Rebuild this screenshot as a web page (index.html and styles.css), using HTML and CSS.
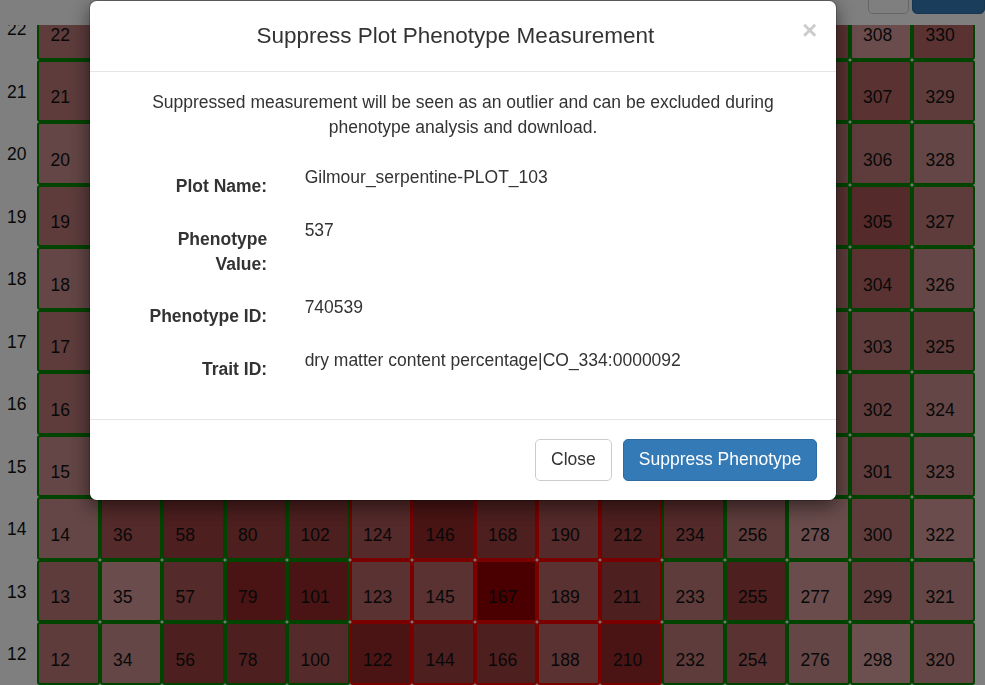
FILE: index.html
```html
<!DOCTYPE html>
<html lang="en">
<head>
<meta charset="utf-8">
<title>Suppress Plot Phenotype Measurement</title>
<link rel="stylesheet" href="styles.css">
</head>
<body>
<div class="topbar">
  <button class="btn btn-default tb-small">▾</button>
  <button class="btn btn-primary tb-wide">Save</button>
</div>
<div class="field">
  <div class="grid">
    <div class="row"><div class="rowlabel">22</div>
      <div class="plot h3">22</div><div class="plot h5">44</div><div class="plot h6">66</div><div class="plot h5">88</div><div class="plot h6">110</div><div class="plot ctl h5">132</div><div class="plot ctl h7">154</div><div class="plot ctl h6">176</div><div class="plot ctl h5">198</div><div class="plot ctl h6">220</div><div class="plot h4">242</div><div class="plot h3">264</div><div class="plot h4">286</div><div class="plot h1">308</div><div class="plot h4">330</div>
    </div>
    <div class="row"><div class="rowlabel">21</div>
      <div class="plot h3">21</div><div class="plot h4">43</div><div class="plot h6">65</div><div class="plot h6">87</div><div class="plot h5">109</div><div class="plot ctl h6">131</div><div class="plot ctl h6">153</div><div class="plot ctl h7">175</div><div class="plot ctl h5">197</div><div class="plot ctl h6">219</div><div class="plot h5">241</div><div class="plot h3">263</div><div class="plot h4">285</div><div class="plot h4">307</div><div class="plot h3">329</div>
    </div>
    <div class="row"><div class="rowlabel">20</div>
      <div class="plot h2">20</div><div class="plot h4">42</div><div class="plot h5">64</div><div class="plot h6">86</div><div class="plot h6">108</div><div class="plot ctl h5">130</div><div class="plot ctl h7">152</div><div class="plot ctl h6">174</div><div class="plot ctl h4">196</div><div class="plot ctl h7">218</div><div class="plot h5">240</div><div class="plot h4">262</div><div class="plot h3">284</div><div class="plot h3">306</div><div class="plot h2">328</div>
    </div>
    <div class="row"><div class="rowlabel">19</div>
      <div class="plot h3">19</div><div class="plot h5">41</div><div class="plot h6">63</div><div class="plot h5">85</div><div class="plot h7">107</div><div class="plot ctl h6">129</div><div class="plot ctl h6">151</div><div class="plot ctl h5">173</div><div class="plot ctl h6">195</div><div class="plot ctl h6">217</div><div class="plot h4">239</div><div class="plot h3">261</div><div class="plot h4">283</div><div class="plot h5">305</div><div class="plot h3">327</div>
    </div>
    <div class="row"><div class="rowlabel">18</div>
      <div class="plot h2">18</div><div class="plot h4">40</div><div class="plot h5">62</div><div class="plot h6">84</div><div class="plot h6">106</div><div class="plot ctl h7">128</div><div class="plot ctl h6">150</div><div class="plot ctl h6">172</div><div class="plot ctl h5">194</div><div class="plot ctl h7">216</div><div class="plot h5">238</div><div class="plot h4">260</div><div class="plot h3">282</div><div class="plot h4">304</div><div class="plot h2">326</div>
    </div>
    <div class="row"><div class="rowlabel">17</div>
      <div class="plot h3">17</div><div class="plot h5">39</div><div class="plot h6">61</div><div class="plot h6">83</div><div class="plot h5">105</div><div class="plot ctl h6">127</div><div class="plot ctl h7">149</div><div class="plot ctl h6">171</div><div class="plot ctl h5">193</div><div class="plot ctl h6">215</div><div class="plot h4">237</div><div class="plot h4">259</div><div class="plot h3">281</div><div class="plot h3">303</div><div class="plot h3">325</div>
    </div>
    <div class="row"><div class="rowlabel">16</div>
      <div class="plot h3">16</div><div class="plot h4">38</div><div class="plot h6">60</div><div class="plot h5">82</div><div class="plot h6">104</div><div class="plot ctl h5">126</div><div class="plot ctl h6">148</div><div class="plot ctl h7">170</div><div class="plot ctl h5">192</div><div class="plot ctl h6">214</div><div class="plot h5">236</div><div class="plot h3">258</div><div class="plot h3">280</div><div class="plot h3">302</div><div class="plot h2">324</div>
    </div>
    <div class="row"><div class="rowlabel">15</div>
      <div class="plot h2">15</div><div class="plot h4">37</div><div class="plot h5">59</div><div class="plot h6">81</div><div class="plot h6">103</div><div class="plot ctl h6">125</div><div class="plot ctl h6">147</div><div class="plot ctl h6">169</div><div class="plot ctl h4">191</div><div class="plot ctl h7">213</div><div class="plot h5">235</div><div class="plot h4">257</div><div class="plot h2">279</div><div class="plot h3">301</div><div class="plot h2">323</div>
    </div>
    <div class="row"><div class="rowlabel">14</div>
      <div class="plot h2">14</div><div class="plot h5">36</div><div class="plot h6">58</div><div class="plot h6">80</div><div class="plot h6">102</div><div class="plot ctl h5">124</div><div class="plot ctl h7">146</div><div class="plot ctl h6">168</div><div class="plot ctl h5">190</div><div class="plot ctl h6">212</div><div class="plot h5">234</div><div class="plot h3">256</div><div class="plot h1">278</div><div class="plot h3">300</div><div class="plot h1">322</div>
    </div>
    <div class="row"><div class="rowlabel">13</div>
      <div class="plot h3">13</div><div class="plot h1">35</div><div class="plot h5">57</div><div class="plot h7">79</div><div class="plot h7">101</div><div class="plot ctl h4">123</div><div class="plot ctl h4">145</div><div class="plot ctl h8">167</div><div class="plot ctl h4">189</div><div class="plot ctl h6">211</div><div class="plot h3">233</div><div class="plot h6">255</div><div class="plot h1">277</div><div class="plot h3">299</div><div class="plot h2">321</div>
    </div>
    <div class="row"><div class="rowlabel">12</div>
      <div class="plot h3">12</div><div class="plot h2">34</div><div class="plot h6">56</div><div class="plot h6">78</div><div class="plot h5">100</div><div class="plot ctl h7">122</div><div class="plot ctl h6">144</div><div class="plot ctl h6">166</div><div class="plot ctl h4">188</div><div class="plot ctl h7">210</div><div class="plot h3">232</div><div class="plot h4">254</div><div class="plot h2">276</div><div class="plot h0">298</div><div class="plot h2">320</div>
    </div>
  </div>
</div>

<div class="backdrop"></div>
<div class="modal">
  <div class="dialog">
    <div class="modal-header">
      <h4 class="modal-title">Suppress Plot Phenotype Measurement</h4>
      <button class="close" type="button">×</button>
    </div>
    <div class="modal-body">
      <p class="intro">Suppressed measurement will be seen as an outlier and can be excluded during phenotype analysis and download.</p>
      <div class="form">
        <div class="form-group">
          <div class="control-label">Plot Name:</div>
          <div class="value">Gilmour_serpentine-PLOT_103</div>
        </div>
        <div class="form-group">
          <div class="control-label">Phenotype Value:</div>
          <div class="value">537</div>
        </div>
        <div class="form-group">
          <div class="control-label">Phenotype ID:</div>
          <div class="value">740539</div>
        </div>
        <div class="form-group">
          <div class="control-label">Trait ID:</div>
          <div class="value">dry matter content percentage|CO_334:0000092</div>
        </div>
      </div>
    </div>
    <div class="modal-footer">
      <button class="btn btn-default" type="button">Close</button>
      <button class="btn btn-primary" type="button">Suppress Phenotype</button>
    </div>
  </div>
</div>
</body>
</html>
```

FILE: styles.css
```css
* { box-sizing: border-box; }

body {
  margin: 0;
  font-family: "Liberation Sans", Arial, Helvetica, sans-serif;
  font-size: 17.5px;
  line-height: 25px;
  color: #333;
  background: #fff;
  overflow: hidden;
}

/* ---------- top bar ---------- */
.topbar {
  height: 25px;
  display: flex;
  align-items: flex-start;
  gap: 3px;
  padding-left: 868px;
  white-space: nowrap;
  overflow: hidden;
}
.topbar .btn { margin-top: -28px; }
.tb-small { width: 49px; }
.tb-wide { width: 110px; }

/* ---------- field layout ---------- */
.field {
  height: 660px;
  overflow: hidden;
}
.grid { margin-top: -28px; }
.row {
  display: flex;
  height: 62.5px;
}
.rowlabel {
  width: 37px;
  flex: none;
  padding-left: 7px;
  padding-top: 3px;
  display: flex;
  align-items: center;
  color: #111;
}
.plot {
  width: 62.5px;
  height: 62.5px;
  flex: none;
  border: 2px solid #008800;
  border-radius: 3px;
  padding: 14px 0 0 11.5px;
  display: flex;
  align-items: center;
  color: #111;
}
.plot.ctl { border-color: #f40000; }

.h0 { background: #d8a0a0; }
.h1 { background: #d49898; }
.h2 { background: #c88c8c; }
.h3 { background: #bc7878; }
.h4 { background: #b46464; }
.h5 { background: #aa5454; }
.h6 { background: #9c3e3e; }
.h7 { background: #942828; }
.h8 { background: #940000; }

/* ---------- buttons ---------- */
.btn {
  font-family: inherit;
  font-size: 17.5px;
  line-height: 25px;
  padding: 7.5px 15px;
  border: 1px solid transparent;
  border-radius: 5px;
  cursor: pointer;
}
.btn-default {
  background: #fff;
  border-color: #ccc;
  color: #333;
}
.btn-primary {
  background: #337ab7;
  border-color: #2e6da4;
  color: #fff;
}

/* ---------- modal ---------- */
.backdrop {
  position: fixed;
  inset: 0;
  background: rgba(0, 0, 0, 0.5);
}
.modal {
  position: fixed;
  inset: 0;
}
.dialog {
  width: 748px;
  margin-left: 89px;
  background: #fff;
  background-clip: padding-box;
  border: 1px solid rgba(0, 0, 0, 0.2);
  border-radius: 7.5px;
  box-shadow: 0 6px 19px rgba(0, 0, 0, 0.5);
}
.modal-header {
  display: flex;
  align-items: flex-start;
  padding: 18.75px;
  border-bottom: 1px solid #e5e5e5;
}
.modal-title {
  flex: 1;
  margin: 0;
  font-size: 22.5px;
  line-height: 32px;
  font-weight: 500;
  text-align: center;
  color: #333;
}
.close {
  margin-top: -2.5px;
  padding: 0;
  border: 0;
  background: none;
  font-family: inherit;
  font-size: 26.25px;
  font-weight: 700;
  line-height: 1;
  color: #000;
  text-shadow: 0 1px 0 #fff;
  opacity: 0.2;
}
.modal-body { padding: 18.75px; }
.intro {
  max-width: 680px;
  margin: 0 auto 25px;
  text-align: center;
}
.form-group {
  display: flex;
  margin-bottom: 18.75px;
}
.control-label {
  width: 25%;
  flex: none;
  padding: 8.75px 18.75px 0;
  text-align: right;
  font-weight: 700;
}
.value {
  flex: 1;
  padding: 0 18.75px;
}
.modal-footer {
  display: flex;
  justify-content: flex-end;
  gap: 11px;
  padding: 18.75px;
  border-top: 1px solid #e5e5e5;
}
```
